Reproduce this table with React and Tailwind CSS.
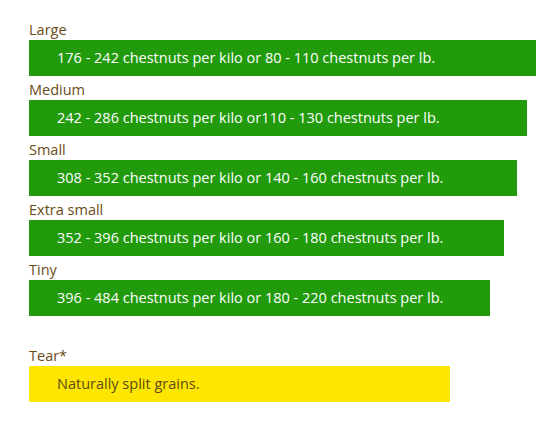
const sizes = [
  { label: "Large", text: "176 - 242 chestnuts per kilo or 80 - 110 chestnuts per lb.", width: "w-[507px]" },
  { label: "Medium", text: "242 - 286 chestnuts per kilo or110 - 130 chestnuts per lb.", width: "w-[498px]" },
  { label: "Small", text: "308 - 352 chestnuts per kilo or 140 - 160 chestnuts per lb.", width: "w-[488px]" },
  { label: "Extra small", text: "352 - 396 chestnuts per kilo or 160 - 180 chestnuts per lb.", width: "w-[475px]" },
  { label: "Tiny", text: "396 - 484 chestnuts per kilo or 180 - 220 chestnuts per lb.", width: "w-[461px]" },
];

function Row({ label, text, width, bar = "bg-[#219a0b] text-white" }) {
  return (
    <div>
      <div className="pt-1 text-[14.5px] font-medium leading-5 text-[#6a4c18]">{label}</div>
      <div className={`flex h-9 items-center pl-7 text-[14.5px] font-medium ${width} ${bar}`}>
        {text}
      </div>
    </div>
  );
}

export default function App() {
  return (
    <div
      className="min-h-screen bg-white pl-[29px] pt-4"
      style={{ fontFamily: '"Open Sans", "Liberation Sans", sans-serif' }}
    >
      {sizes.map((s) => (
        <Row key={s.label} {...s} />
      ))}
      <div className="mt-[26px]">
        <Row
          label="Tear*"
          text="Naturally split grains."
          width="w-[421px]"
          bar="bg-[#ffe600] text-[#5b4a14]"
        />
      </div>
    </div>
  );
}
